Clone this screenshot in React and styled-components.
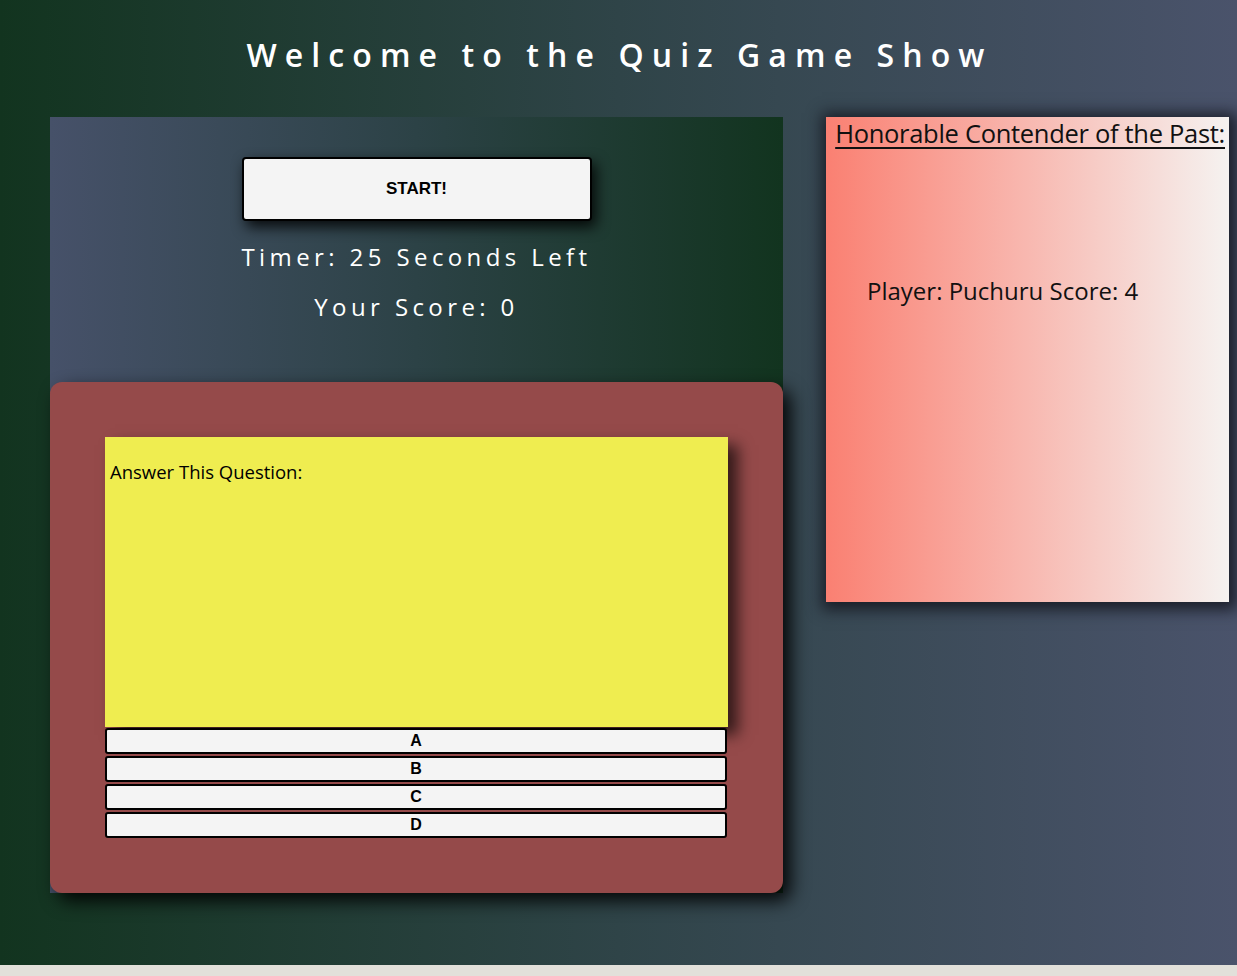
import React from 'react'
import styled, { createGlobalStyle } from 'styled-components'

const GlobalStyle = createGlobalStyle`
  html, body {
    margin: 0;
    padding: 0;
  }
  body {
    background: linear-gradient(90deg, #12341f 0%, #2f4448 50%, #4a536b 100%);
    font-family: "Open Sans", "Noto Sans", sans-serif;
  }
`

const Page = styled.div`
  min-height: 100vh;
  display: flex;
  flex-direction: column;
`

const Title = styled.h1`
  margin: 33px 0 0;
  text-align: center;
  color: #ffffff;
  font-size: 32px;
  line-height: 44px;
  font-weight: 600;
  letter-spacing: 8.1px;
  padding-left: 2px;
`

const Main = styled.main`
  display: flex;
  align-items: flex-start;
  gap: 43px;
  padding: 40px 8px 0 50px;
  flex: 1;
`

const GamePanel = styled.section`
  width: 733px;
  display: flex;
  flex-direction: column;
  background: linear-gradient(90deg, #465169 0%, #2c4246 50%, #12341f 100%);
`

const Controls = styled.div`
  height: 265px;
  display: flex;
  flex-direction: column;
  align-items: center;
  padding-top: 40px;
  box-sizing: border-box;
`

const StartButton = styled.button`
  width: 350px;
  height: 64px;
  background: #f4f4f4;
  border: 2px solid #000;
  border-radius: 4px;
  box-shadow: 4px 6px 14px rgba(0, 0, 0, 0.85);
  font-family: "Liberation Sans", Arial, sans-serif;
  font-weight: 700;
  font-size: 17px;
  color: #000;
`

const Stat = styled.p`
  margin: ${p => p.$top}px 0 0;
  color: #fff;
  font-size: 24px;
  line-height: 30px;
  font-weight: 500;
  letter-spacing: 4.4px;
`

const QuizCard = styled.div`
  background: #954a4a;
  border-radius: 12px;
  padding: 55px;
  box-shadow: 8px 8px 18px rgba(0, 0, 0, 0.9);
  display: flex;
  flex-direction: column;
`

const QuestionBox = styled.div`
  height: 290px;
  background: #efed50;
  box-shadow: 10px 8px 14px rgba(0, 0, 0, 0.65);
  padding: 22px 5px;
  box-sizing: border-box;
  color: #000;
  font-size: 18.5px;
  letter-spacing: 0;
`

const Answers = styled.div`
  display: flex;
  flex-direction: column;
  gap: 2px;
  margin-top: 1px;
`

const AnswerButton = styled.button`
  height: 26px;
  width: 622px;
  background: #f4f4f4;
  border: 2px solid #000;
  border-radius: 3px;
  font-family: "Liberation Sans", Arial, sans-serif;
  font-weight: 700;
  font-size: 16px;
  color: #000;
  padding: 0;
`

const HallPanel = styled.aside`
  width: 403px;
  height: 485px;
  background: linear-gradient(90deg, #fa8072 0%, #f8b8b0 50%, #f5f2f0 100%);
  box-shadow: 2px 2px 14px 6px rgba(20, 22, 32, 0.85);
  color: #111;
`

const HallTitle = styled.h2`
  margin: 0;
  text-align: right;
  padding-right: 4px;
  font-size: 25.5px;
  line-height: 32px;
  font-weight: 400;
  text-decoration: underline;
  text-underline-offset: 4px;
  text-decoration-thickness: 2px;
  letter-spacing: -0.3px;
  white-space: nowrap;
`

const PlayerEntry = styled.p`
  margin: 127px 0 0 41px;
  font-size: 24px;
  line-height: 30px;
  letter-spacing: 0;
`

const Taskbar = styled.div`
  height: 11px;
  background: #e2e0da;
  margin-top: auto;
`

export default function App() {
  return (
    <Page>
      <GlobalStyle />
      <Title>Welcome to the Quiz Game Show</Title>
      <Main>
        <GamePanel>
          <Controls>
            <StartButton>START!</StartButton>
            <Stat $top={21}>Timer: 25 Seconds Left</Stat>
            <Stat $top={20}>Your Score: 0</Stat>
          </Controls>
          <QuizCard>
            <QuestionBox>Answer This Question:</QuestionBox>
            <Answers>
              {['A', 'B', 'C', 'D'].map(l => (
                <AnswerButton key={l}>{l}</AnswerButton>
              ))}
            </Answers>
          </QuizCard>
        </GamePanel>
        <HallPanel>
          <HallTitle>Honorable Contender of the Past:</HallTitle>
          <PlayerEntry>Player: Puchuru Score: 4</PlayerEntry>
        </HallPanel>
      </Main>
      <Taskbar />
    </Page>
  )
}
